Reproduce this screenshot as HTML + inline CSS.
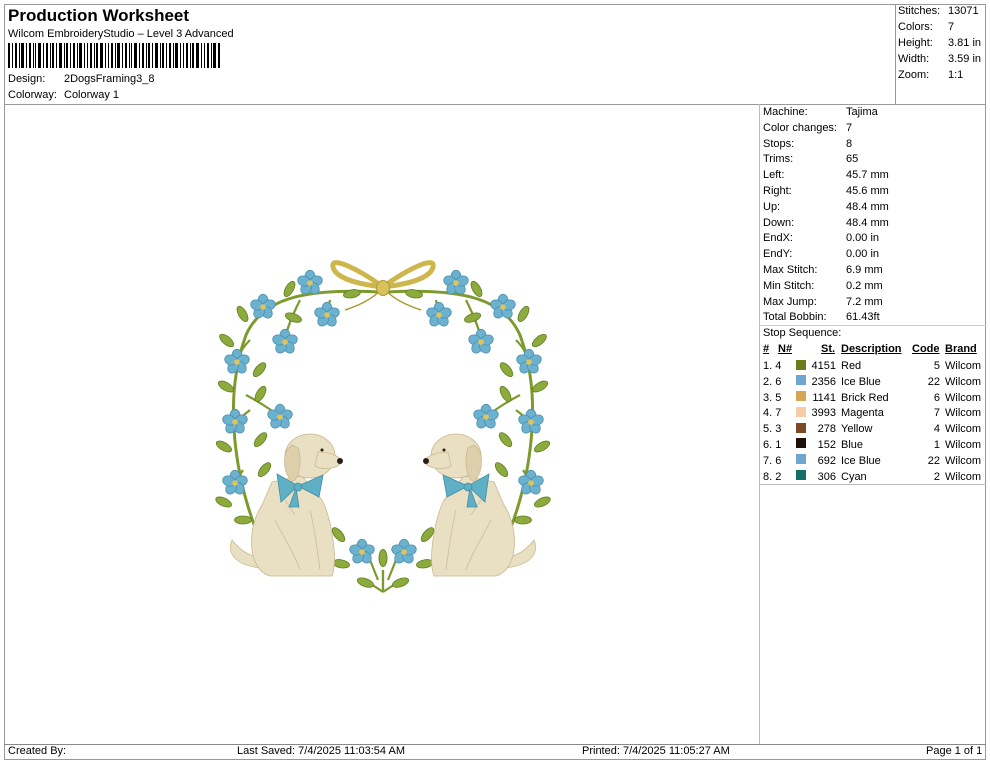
<!DOCTYPE html>
<html><head><meta charset="utf-8"><style>
*{margin:0;padding:0;box-sizing:border-box}
body{width:990px;height:762px;background:#fff;position:relative;overflow:hidden;font-family:"Liberation Sans",Arial,sans-serif;font-size:11px;color:#000}
.a{position:absolute;white-space:nowrap}
.ln{position:absolute;background:#999}
.sw{position:absolute;width:10px;height:10px}
</style></head><body>
<div class="ln" style="left:4px;top:4px;width:982px;height:1px"></div>
<div class="ln" style="left:4px;top:4px;width:1px;height:756px"></div>
<div class="ln" style="left:985px;top:4px;width:1px;height:756px"></div>
<div class="ln" style="left:4px;top:104px;width:982px;height:1px"></div>
<div class="ln" style="left:895px;top:4px;width:1px;height:100px"></div>
<div class="ln" style="left:759px;top:104px;width:1px;height:640px;background:#bbb"></div>
<div class="ln" style="left:759px;top:484px;width:227px;height:1px;background:#bbb"></div>
<div class="ln" style="left:759px;top:325px;width:227px;height:1px;background:#ccc"></div>
<div class="ln" style="left:4px;top:744px;width:982px;height:1px;background:#888"></div>
<div class="ln" style="left:4px;top:759px;width:982px;height:1px"></div>

<div class="a" style="left:8px;top:6px;font-size:17px;font-weight:bold">Production Worksheet</div>
<div class="a" style="left:8px;top:28px">Wilcom EmbroideryStudio – Level 3 Advanced</div>
<svg class="a" style="left:8px;top:43px" width="212" height="25">
<g fill="#000">
<rect x="0" width="2" height="25"/><rect x="4" width="1" height="25"/><rect x="7" width="2" height="25"/><rect x="11" width="1" height="25"/><rect x="13" width="3" height="25"/><rect x="18" width="1" height="25"/><rect x="21" width="2" height="25"/><rect x="25" width="1" height="25"/><rect x="27" width="1" height="25"/><rect x="30" width="3" height="25"/><rect x="35" width="1" height="25"/><rect x="38" width="2" height="25"/><rect x="42" width="1" height="25"/><rect x="44" width="2" height="25"/><rect x="48" width="1" height="25"/><rect x="51" width="3" height="25"/><rect x="56" width="1" height="25"/><rect x="58" width="2" height="25"/><rect x="62" width="1" height="25"/><rect x="65" width="2" height="25"/><rect x="69" width="1" height="25"/><rect x="71" width="3" height="25"/><rect x="76" width="1" height="25"/><rect x="79" width="1" height="25"/><rect x="82" width="2" height="25"/><rect x="86" width="1" height="25"/><rect x="88" width="2" height="25"/><rect x="92" width="3" height="25"/><rect x="97" width="1" height="25"/><rect x="100" width="1" height="25"/><rect x="103" width="2" height="25"/><rect x="107" width="1" height="25"/><rect x="109" width="3" height="25"/><rect x="114" width="1" height="25"/><rect x="117" width="2" height="25"/><rect x="121" width="1" height="25"/><rect x="123" width="1" height="25"/><rect x="126" width="3" height="25"/><rect x="131" width="1" height="25"/><rect x="134" width="2" height="25"/><rect x="138" width="1" height="25"/><rect x="140" width="2" height="25"/><rect x="144" width="1" height="25"/><rect x="147" width="3" height="25"/><rect x="152" width="1" height="25"/><rect x="154" width="2" height="25"/><rect x="158" width="1" height="25"/><rect x="161" width="2" height="25"/><rect x="165" width="1" height="25"/><rect x="167" width="3" height="25"/><rect x="172" width="1" height="25"/><rect x="175" width="1" height="25"/><rect x="178" width="2" height="25"/><rect x="182" width="1" height="25"/><rect x="184" width="2" height="25"/><rect x="188" width="3" height="25"/><rect x="193" width="1" height="25"/><rect x="196" width="1" height="25"/><rect x="199" width="2" height="25"/><rect x="203" width="1" height="25"/><rect x="205" width="3" height="25"/><rect x="210" width="2" height="25"/>
</g></svg>
<div class="a" style="left:8px;top:73px">Design:</div><div class="a" style="left:64px;top:73px">2DogsFraming3_8</div>
<div class="a" style="left:8px;top:89px">Colorway:</div><div class="a" style="left:64px;top:89px">Colorway 1</div>

<div class="a" style="left:898px;top:5px">Stitches:</div><div class="a" style="left:948px;top:5px">13071</div>
<div class="a" style="left:898px;top:21px">Colors:</div><div class="a" style="left:948px;top:21px">7</div>
<div class="a" style="left:898px;top:37px">Height:</div><div class="a" style="left:948px;top:37px">3.81 in</div>
<div class="a" style="left:898px;top:53px">Width:</div><div class="a" style="left:948px;top:53px">3.59 in</div>
<div class="a" style="left:898px;top:69px">Zoom:</div><div class="a" style="left:948px;top:69px">1:1</div>

<div class="a" style="left:763px;top:105px;line-height:15.8px">Machine:<br>Color changes:<br>Stops:<br>Trims:<br>Left:<br>Right:<br>Up:<br>Down:<br>EndX:<br>EndY:<br>Max Stitch:<br>Min Stitch:<br>Max Jump:<br>Total Bobbin:<br>Stop Sequence:</div>
<div class="a" style="left:846px;top:105px;line-height:15.8px">Tajima<br>7<br>8<br>65<br>45.7 mm<br>45.6 mm<br>48.4 mm<br>48.4 mm<br>0.00 in<br>0.00 in<br>6.9 mm<br>0.2 mm<br>7.2 mm<br>61.43ft</div>

<div class="a" style="left:763px;top:343px;font-weight:bold;text-decoration:underline">#</div>
<div class="a" style="left:778px;top:343px;font-weight:bold;text-decoration:underline">N#</div>
<div class="a" style="left:821px;top:343px;font-weight:bold;text-decoration:underline">St.</div>
<div class="a" style="left:841px;top:343px;font-weight:bold;text-decoration:underline">Description</div>
<div class="a" style="left:912px;top:343px;font-weight:bold;text-decoration:underline">Code</div>
<div class="a" style="left:945px;top:343px;font-weight:bold;text-decoration:underline">Brand</div>
<div class="a" style="left:763px;top:359px;line-height:15.8px">1. 4<br>2. 6<br>3. 5<br>4. 7<br>5. 3<br>6. 1<br>7. 6<br>8. 2</div>
<div class="a" style="left:806px;top:359px;line-height:15.8px;text-align:right;width:30px">4151<br>2356<br>1141<br>3993<br>278<br>152<br>692<br>306</div>
<div class="a" style="left:841px;top:359px;line-height:15.8px">Red<br>Ice Blue<br>Brick Red<br>Magenta<br>Yellow<br>Blue<br>Ice Blue<br>Cyan</div>
<div class="a" style="left:910px;top:359px;line-height:15.8px;text-align:right;width:30px">5<br>22<br>6<br>7<br>4<br>1<br>22<br>2</div>
<div class="a" style="left:945px;top:359px;line-height:15.8px">Wilcom<br>Wilcom<br>Wilcom<br>Wilcom<br>Wilcom<br>Wilcom<br>Wilcom<br>Wilcom</div>
<div class="sw" style="left:796px;top:360px;background:#6b7d1a"></div>
<div class="sw" style="left:796px;top:375px;background:#6ea6cf"></div>
<div class="sw" style="left:796px;top:391px;background:#d4a656"></div>
<div class="sw" style="left:796px;top:407px;background:#f6cda6"></div>
<div class="sw" style="left:796px;top:423px;background:#7a4b28"></div>
<div class="sw" style="left:796px;top:438px;background:#1e120b"></div>
<div class="sw" style="left:796px;top:454px;background:#6ea6cf"></div>
<div class="sw" style="left:796px;top:470px;background:#137066"></div>

<div class="a" style="left:8px;top:745px">Created By:</div>
<div class="a" style="left:237px;top:745px">Last Saved: 7/4/2025 11:03:54 AM</div>
<div class="a" style="left:582px;top:745px">Printed: 7/4/2025 11:05:27 AM</div>
<div class="a" style="left:926px;top:745px">Page 1 of 1</div>

<svg class="a" style="left:0;top:0" width="760" height="740">
<defs>
<g id="fl"><g fill="#6cb2cf" stroke="#4a8fb0" stroke-width="0.8">
<ellipse cx="0" cy="-6.5" rx="5" ry="6.2"/>
<ellipse cx="0" cy="-6.5" rx="5" ry="6.2" transform="rotate(72)"/>
<ellipse cx="0" cy="-6.5" rx="5" ry="6.2" transform="rotate(144)"/>
<ellipse cx="0" cy="-6.5" rx="5" ry="6.2" transform="rotate(216)"/>
<ellipse cx="0" cy="-6.5" rx="5" ry="6.2" transform="rotate(288)"/></g>
<circle r="2.8" fill="#e2c35a"/></g>
<ellipse id="lf" cx="0" cy="-7" rx="4" ry="8.5" fill="#8cab3c" stroke="#5f7d22" stroke-width="0.8"/>
<g id="half">
<path d="M258,535 C236,480 222,400 246,335 C262,300 300,288 378,292" fill="none" stroke="#7d9a2e" stroke-width="3"/>
<path d="M300,300 C290,320 285,335 285,342 M268,318 L263,307 M250,340 C240,350 237,360 237,362 M250,410 L235,422 M246,395 C265,405 278,415 280,417 M243,470 L235,483 M330,300 L327,315" fill="none" stroke="#7d9a2e" stroke-width="2.2"/>
<use href="#lf" transform="translate(246,320) rotate(-30)"/>
<use href="#lf" transform="translate(232,345) rotate(-50)"/>
<use href="#lf" transform="translate(255,375) rotate(40)"/>
<use href="#lf" transform="translate(232,390) rotate(-60)"/>
<use href="#lf" transform="translate(257,400) rotate(30)"/>
<use href="#lf" transform="translate(230,450) rotate(-60)"/>
<use href="#lf" transform="translate(256,445) rotate(40)"/>
<use href="#lf" transform="translate(230,505) rotate(-65)"/>
<use href="#lf" transform="translate(260,475) rotate(40)"/>
<use href="#lf" transform="translate(250,520) rotate(-90)"/>
<use href="#lf" transform="translate(286,295) rotate(30)"/>
<use href="#lf" transform="translate(300,320) rotate(-70)"/>
<use href="#lf" transform="translate(345,295) rotate(80)"/>
<use href="#fl" transform="translate(310,283)"/>
<use href="#fl" transform="translate(263,307)"/>
<use href="#fl" transform="translate(327,315)"/>
<use href="#fl" transform="translate(285,342)"/>
<use href="#fl" transform="translate(237,362)"/>
<use href="#fl" transform="translate(235,422)"/>
<use href="#fl" transform="translate(280,417)"/>
<use href="#fl" transform="translate(235,483)"/>
<path d="M383,592 L365,580 M383,592 L383,570 M370,560 L378,580" fill="none" stroke="#7d9a2e" stroke-width="2.2"/>
<use href="#lf" transform="translate(372,585) rotate(-70)"/>
<use href="#lf" transform="translate(343,540) rotate(-40)"/>
<use href="#lf" transform="translate(348,565) rotate(-80)"/>
<use href="#lf" transform="translate(383,565) rotate(0)"/>
<use href="#fl" transform="translate(362,552)"/>
<g fill="#e9dfc3" stroke="#c9b98e" stroke-width="0.8">
<path d="M232,540 C226,555 238,566 262,568 L262,558 C248,556 240,550 232,540Z"/>
<path d="M262,505 C246,530 248,570 270,576 L332,576 C338,560 332,520 322,500 L302,476 L272,482Z"/>
<ellipse cx="310" cy="456" rx="25" ry="22"/>
<path d="M318,452 C330,452 340,456 342,462 C336,470 322,470 315,466Z"/>
<path d="M292,445 C282,452 282,470 292,482 C300,478 302,460 298,448Z" fill="#ddd0aa"/>
</g>
<g stroke="#cbbd96" stroke-width="0.8" fill="none">
<path d="M275,520 C285,540 295,555 300,570 M310,510 C315,530 318,555 320,570 M285,500 L295,515"/>
</g>
<circle cx="340" cy="461" r="3" fill="#2a1d14"/>
<circle cx="322" cy="450" r="1.5" fill="#2a1d14"/>
<g fill="#5fb0c4" stroke="#3f8ea3" stroke-width="0.8">
<path d="M298,486 L277,474 L281,502 Z"/>
<path d="M298,486 L323,475 L319,497 Z"/>
<path d="M296,488 L289,507 L299,507 Z"/>
<circle cx="298" cy="487" r="4"/>
</g>
</g>
</defs>
<use href="#half"/>
<use href="#half" transform="translate(766,0) scale(-1,1)"/>
<g fill="none" stroke="#cdb74c" stroke-width="5">
<path d="M383,287 C360,270 330,255 333,267 C336,280 365,285 383,287"/>
<path d="M383,287 C406,270 436,255 433,267 C430,280 401,285 383,287"/>
</g>
<g fill="none" stroke="#a99a30" stroke-width="1.5">
<path d="M380,291 C370,300 360,305 345,310 M386,291 C396,300 406,305 421,310"/>
</g>
<ellipse cx="383" cy="288" rx="6.5" ry="7.5" fill="#d8c25a" stroke="#a99a30"/>
</svg>
</body></html>
